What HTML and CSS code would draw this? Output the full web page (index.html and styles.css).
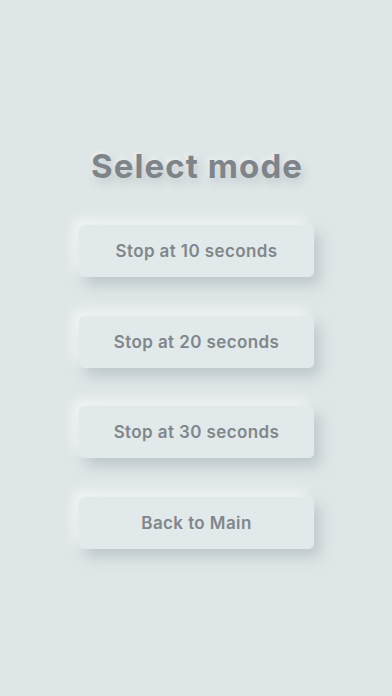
FILE: index.html
```html
<!DOCTYPE html>
<html>
<head>
<meta charset="utf-8">
<link rel="stylesheet" href="styles.css">
</head>
<body>
<main class="screen">
  <h1 class="title">Select mode</h1>
  <div class="buttons">
    <button class="btn">Stop at 10 seconds</button>
    <button class="btn">Stop at 20 seconds</button>
    <button class="btn">Stop at 30 seconds</button>
    <button class="btn">Back to Main</button>
  </div>
</main>
</body>
</html>
```

FILE: styles.css
```css
html, body {
  margin: 0;
  padding: 0;
  background: #dfe6e7;
}
.screen {
  width: 392px;
  height: 696px;
  box-sizing: border-box;
  padding-top: 146px;
  display: flex;
  flex-direction: column;
  align-items: center;
  font-family: Inter, "Liberation Sans", Arial, sans-serif;
}
.title {
  margin: 0;
  font-size: 33px;
  line-height: 40px;
  font-weight: 700;
  color: #7e8487;
  letter-spacing: 1.1px;
  margin-left: 2px;
  text-shadow: 3px 5px 8px rgba(150, 165, 170, 0.45), -2px -2px 5px rgba(255,255,255,0.5);
}
.buttons {
  margin-top: 39px;
  display: flex;
  flex-direction: column;
  gap: 38.5px;
  margin-left: 1px;
}
.btn {
  width: 235px;
  height: 52px;
  border: none;
  border-radius: 5px;
  background: #e2e9ea;
  font-family: Inter, "Liberation Sans", Arial, sans-serif;
  font-size: 17px;
  font-weight: 600;
  letter-spacing: 0.4px;
  color: #80878a;
  box-shadow: 6px 8px 14px rgba(160, 175, 180, 0.55), -6px -6px 12px rgba(255, 255, 255, 0.6);
  padding: 0;
}
```
